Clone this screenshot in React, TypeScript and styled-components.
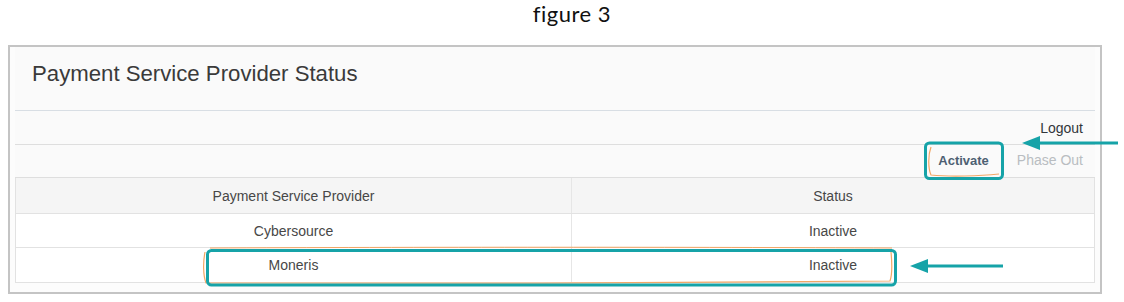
import React from "react";
import styled, { createGlobalStyle } from "styled-components";

const Global = createGlobalStyle`
  html, body { margin: 0; padding: 0; background: #ffffff; }
  body { font-family: "Liberation Sans", Arial, sans-serif; }
`;

const Page = styled.div`
  position: relative;
  width: 1124px;
  height: 302px;
  overflow: hidden;
`;

const Caption = styled.div`
  height: 45px;
  box-sizing: border-box;
  padding: 1px 0 0 20px;
  text-align: center;
  font-family: Lato, "Open Sans", sans-serif;
  font-size: 22px;
  letter-spacing: 0.5px;
  line-height: 26px;
  color: #111;
`;

const Frame = styled.section`
  margin-left: 8px;
  width: 1094px;
  height: 249px;
  box-sizing: border-box;
  border: 2px solid #c4c4c4;
  padding: 0 5px;
  background: #fcfcfc;
  display: flex;
  flex-direction: column;
`;

const Header = styled.header`
  height: 64px;
  box-sizing: border-box;
  border-bottom: 1px solid #d8dee4;
  padding: 12px 0 0 17px;
  background: #fafafa;
`;

const Title = styled.h1`
  margin: 0;
  font-weight: 400;
  font-size: 22.2px;
  line-height: 30px;
  color: #3a3a3a;
`;

const BarRow = styled.div<{ $h: number }>`
  height: ${(p) => p.$h}px;
  box-sizing: border-box;
  border-bottom: 1px solid #dedede;
  background: #fafafa;
  display: flex;
  align-items: center;
  justify-content: flex-end;
  gap: 28px;
  padding-right: 12px;
`;

const LinkText = styled.span`
  font-size: 14px;
  color: #32363a;
`;

const ActionButton = styled.span<{ $enabled?: boolean }>`
  font-size: ${(p) => (p.$enabled ? "13px" : "14px")};
  font-weight: ${(p) => (p.$enabled ? 700 : 400)};
  color: ${(p) => (p.$enabled ? "#4d6072" : "#b9bdc1")};
  margin-top: -2px;
`;

const Table = styled.div`
  display: flex;
  flex-direction: column;
  background: #ffffff;
  border-left: 1px solid #e2e2e2;
  border-right: 1px solid #e2e2e2;
`;

const Row = styled.div<{ $h: number; $head?: boolean }>`
  display: grid;
  grid-template-columns: 555px 1fr;
  height: ${(p) => p.$h}px;
  box-sizing: border-box;
  border-bottom: 1px solid #e2e2e2;
  background: ${(p) => (p.$head ? "#f5f5f5" : "#ffffff")};
`;

const Cell = styled.div`
  display: flex;
  align-items: center;
  justify-content: center;
  font-size: 14px;
  color: #474747;
  & + & {
    border-left: 1px solid #e6e6e6;
  }
`;

const Overlay = styled.svg`
  position: absolute;
  left: 0;
  top: 0;
  pointer-events: none;
`;

const TEAL = "#16a3a8";
const ORANGE = "#f2a766";

const rows = [
  { psp: "Cybersource", status: "Inactive", h: 34 },
  { psp: "Moneris", status: "Inactive", h: 35 },
];

export default function App() {
  return (
    <Page>
      <Global />
      <Caption>figure 3</Caption>
      <Frame>
        <Header>
          <Title>Payment Service Provider Status</Title>
        </Header>
        <BarRow $h={34}>
          <LinkText>Logout</LinkText>
        </BarRow>
        <BarRow $h={33}>
          <ActionButton $enabled>Activate</ActionButton>
          <ActionButton>Phase Out</ActionButton>
        </BarRow>
        <Table>
          <Row $h={36} $head>
            <Cell>Payment Service Provider</Cell>
            <Cell>Status</Cell>
          </Row>
          {rows.map((r) => (
            <Row key={r.psp} $h={r.h}>
              <Cell>{r.psp}</Cell>
              <Cell>{r.status}</Cell>
            </Row>
          ))}
        </Table>
      </Frame>
      <Overlay width="1124" height="302" viewBox="0 0 1124 302">
        <path d="M931 147 C928 155 928 168 931 175 C950 177 980 176 999 174" fill="none" stroke={ORANGE} strokeWidth="1.2" />
        <path d="M205 252 C203 262 203 275 206 283 C400 284 700 283 890 281 C892 275 892 262 891 252" fill="none" stroke={ORANGE} strokeWidth="1.2" />
        <path d="M210 248 C400 247 700 247 892 248" fill="none" stroke={ORANGE} strokeWidth="1" />
        <rect x="925.5" y="143" width="77" height="35.5" rx="4" fill="none" stroke={TEAL} strokeWidth="3" />
        <rect x="207.5" y="250.5" width="688" height="34.5" rx="4" fill="none" stroke={TEAL} strokeWidth="3" />
        <line x1="1118" y1="143" x2="1036" y2="143" stroke={TEAL} strokeWidth="3" />
        <polygon points="1022,143 1040,136 1040,150" fill={TEAL} />
        <line x1="1003" y1="266" x2="924" y2="266" stroke={TEAL} strokeWidth="3" />
        <polygon points="910,266 928,259 928,273" fill={TEAL} />
      </Overlay>
    </Page>
  );
}
